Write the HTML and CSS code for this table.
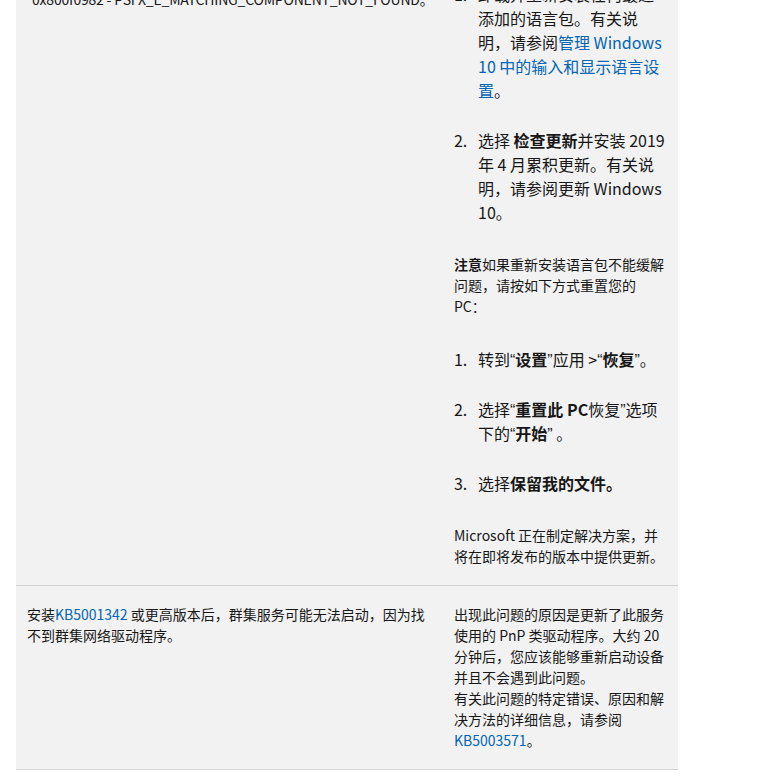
FILE: index.html
```html
<!DOCTYPE html>
<html lang="zh-CN">
<head>
<meta charset="utf-8">
<title>已知问题</title>
<link rel="stylesheet" href="styles.css">
</head>
<body>
<div class="page">
  <table class="issues">
    <colgroup>
      <col class="col-issue">
      <col class="col-fix">
    </colgroup>
    <tbody>
      <tr>
        <td class="cell cell-issue">
          <p>安装 2021 年 4 月 27 日或更高版本的更新后，某些安装了语言包的设备可能无法安装更新，并收到错误：</p>
          <p class="code-line">0x800f0982 - PSFX_E_MATCHING_COMPONENT_NOT_FOUND。</p>
        </td>
        <td class="cell cell-fix">
          <p>要缓解此问题，请执行以下操作：</p>
          <ol class="steps">
            <li>卸载并重新安装任何最近添加的语言包。有关说明，请参阅<a href="#">管理 Windows 10 中的输入和显示语言设置</a>。</li>
            <li>选择 <b>检查更新</b>并安装 2019 年 4 月累积更新。有关说明，请参阅更新 Windows 10。</li>
          </ol>
          <p><b>注意</b>如果重新安装语言包不能缓解问题，请按如下方式重置您的 PC：</p>
          <ol class="steps">
            <li>转到<span class="q">“</span><b>设置</b><span class="q">”</span>应用 &gt;<span class="q">“</span><b>恢复</b><span class="q">”</span>。</li>
            <li>选择<span class="q">“</span><b>重置此 PC</b>恢复<span class="q">”</span>选项下的<span class="q">“</span><b>开始</b><span class="q">”</span> 。</li>
            <li>选择<b>保留我的文件。</b></li>
          </ol>
          <p>Microsoft 正在制定解决方案，并将在即将发布的版本中提供更新。</p>
        </td>
      </tr>
      <tr>
        <td class="cell cell-issue">
          <p>安装<a href="#">KB5001342</a> 或更高版本后，群集服务可能无法启动，因为找不到群集网络驱动程序。</p>
        </td>
        <td class="cell cell-fix">
          <p>出现此问题的原因是更新了此服务使用的 PnP 类驱动程序。大约 20 分钟后，您应该能够重新启动设备并且不会遇到此问题。<br>有关此问题的特定错误、原因和解决方法的详细信息，请参阅 <a href="#">KB5003571</a>。</p>
        </td>
      </tr>
    </tbody>
  </table>
</div>
</body>
</html>
```

FILE: styles.css
```css
html, body {
  margin: 0;
  padding: 0;
  background: #ffffff;
}

body {
  font-family: "Noto Sans CJK SC", "Noto Sans", sans-serif;
  color: #171717;
  font-size: 14px;
  line-height: 21px;
}

.page {
  padding-left: 16px;
  overflow: hidden;
  height: 778px;
}

.issues {
  margin-top: -87px;
  width: 662px;
  table-layout: fixed;
  border-collapse: collapse;
  background: #f2f2f2;
}

.col-issue {
  width: 427px;
}

.col-fix {
  width: 235px;
}

.cell {
  vertical-align: top;
  border-bottom: 1px solid #d2d2d2;
}

.cell-issue {
  padding: 18px 16px 18px 11px;
}

.cell-fix {
  padding: 18px 12px 18px 11px;
}

p {
  margin: 0;
}

.code-line {
  margin-top: 16px;
  padding-left: 5px;
  white-space: nowrap;
  letter-spacing: -0.2px;
}

a {
  color: #0065b3;
  text-decoration: none;
}

b {
  font-weight: 700;
}

.steps {
  margin: 30px 0;
  padding-left: 24px;
  font-size: 16px;
  line-height: 24px;
}

.steps li::marker {
  content: counter(list-item) ".\00a0\00a0\00a0";
}

.steps li + li {
  margin-top: 26px;
}

.q {
  font-family: "Liberation Sans", sans-serif;
  line-height: 0;
}
```
